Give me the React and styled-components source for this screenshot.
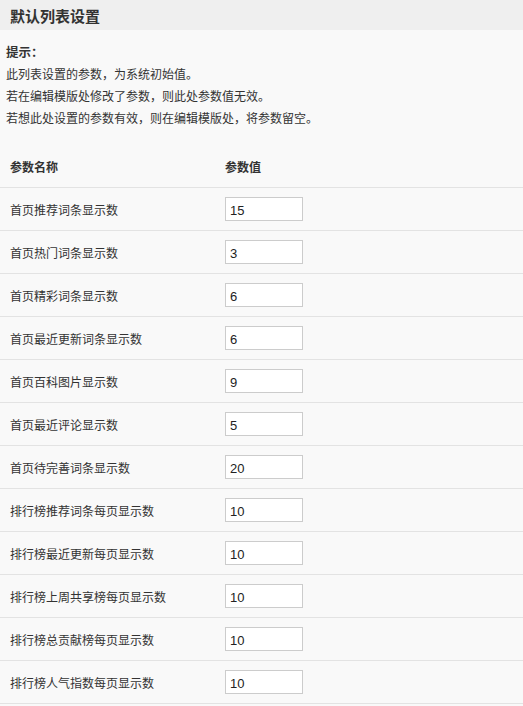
import React from "react";
import styled, { createGlobalStyle } from "styled-components";

const GlobalStyle = createGlobalStyle`
  html, body {
    margin: 0;
    padding: 0;
    background: #f9f9f9;
  }
  body {
    font-family: "Noto Sans CJK SC", "Liberation Sans", sans-serif;
    font-size: 12px;
    color: #333;
  }
`;

const Page = styled.div`
  width: 523px;
  background: #f9f9f9;
`;

const TitleBar = styled.div`
  height: 30px;
  background: #efefef;
  display: flex;
  align-items: center;
  padding-left: 10px;
  font-size: 15px;
  font-weight: bold;
  color: #333;
`;

const Tips = styled.div`
  padding: 11px 6px 0;
  line-height: 22px;
  font-size: 12px;
  color: #333;
`;

const TipsTitle = styled.div`
  font-weight: bold;
  font-size: 12.5px;
`;

const Table = styled.table`
  width: 100%;
  border-collapse: collapse;
  margin-top: 17px;
`;

const HeadCell = styled.th`
  text-align: left;
  font-weight: bold;
  font-size: 12px;
  height: 41px;
  padding: 0 0 0 ${(p) => p.$pad}px;
  width: ${(p) => p.$w || "auto"};
  border-bottom: 1px solid #e3e3e3;
  vertical-align: middle;
`;

const Row = styled.tr`
  border-bottom: 1px solid #e3e3e3;
`;

const Cell = styled.td`
  height: 42px;
  padding: 0 0 0 ${(p) => p.$pad}px;
  vertical-align: middle;
  font-size: 12px;
  color: #333;
`;

const NumInput = styled.input`
  box-sizing: border-box;
  width: 78px;
  height: 24px;
  border: 1px solid #cccccc;
  background: #fff;
  padding: 2px 4px 0;
  font-family: "Liberation Sans", sans-serif;
  font-size: 13px;
  color: #222;
  outline: none;
  display: block;
`;

const rows = [
  ["首页推荐词条显示数", "15"],
  ["首页热门词条显示数", "3"],
  ["首页精彩词条显示数", "6"],
  ["首页最近更新词条显示数", "6"],
  ["首页百科图片显示数", "9"],
  ["首页最近评论显示数", "5"],
  ["首页待完善词条显示数", "20"],
  ["排行榜推荐词条每页显示数", "10"],
  ["排行榜最近更新每页显示数", "10"],
  ["排行榜上周共享榜每页显示数", "10"],
  ["排行榜总贡献榜每页显示数", "10"],
  ["排行榜人气指数每页显示数", "10"],
];

export default function App() {
  return (
    <Page>
      <GlobalStyle />
      <TitleBar>默认列表设置</TitleBar>
      <Tips>
        <TipsTitle>提示：</TipsTitle>
        <div>此列表设置的参数，为系统初始值。</div>
        <div>若在编辑模版处修改了参数，则此处参数值无效。</div>
        <div>若想此处设置的参数有效，则在编辑模版处，将参数留空。</div>
      </Tips>
      <Table>
        <thead>
          <tr>
            <HeadCell $pad={10} $w="215px">参数名称</HeadCell>
            <HeadCell $pad={0}>参数值</HeadCell>
          </tr>
        </thead>
        <tbody>
          {rows.map(([name, val]) => (
            <Row key={name}>
              <Cell $pad={10}>{name}</Cell>
              <Cell $pad={0}>
                <NumInput defaultValue={val} />
              </Cell>
            </Row>
          ))}
        </tbody>
      </Table>
    </Page>
  );
}
